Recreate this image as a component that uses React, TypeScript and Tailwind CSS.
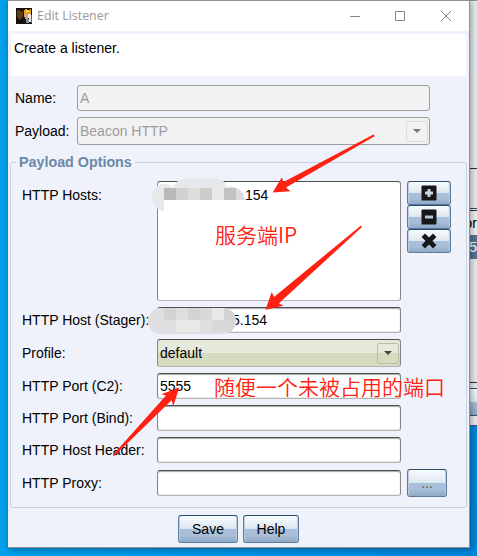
import type { ReactNode } from "react";

const edge = "border border-[#868686] border-t-[#4d4d4f] border-b-[#b3b3b5] rounded-[3px]";

function Row({ label, className, children }: { label: string; className: string; children: ReactNode }) {
  return (
    <div className={`flex shrink-0 ${className}`}>
      <label className="w-[135px] shrink-0 whitespace-nowrap">{label}</label>
      {children}
    </div>
  );
}

function Input({ value = "" }: { value?: string }) {
  return (
    <div className={`h-[26px] w-[244px] bg-white pl-[2px] leading-[25px] shadow-[inset_0_1px_1px_#aaa,inset_0_-1px_0_#ededed] ${edge}`}>{value}</div>
  );
}

function Button({ className, children }: { className: string; children: ReactNode }) {
  return (
    <button
      className={`flex shrink-0 items-center justify-center rounded-[3px] border border-[#5d7b9d] border-t-[#294a69] bg-[linear-gradient(#fafcfe_0%,#dce7f1_48%,#a9bed8_50%,#a9bed8_75%,#8fa9c5_100%)] shadow-[inset_1px_0_0_#b9cce0,inset_-1px_0_0_#b9cce0] ${className}`}
    >
      {children}
    </button>
  );
}

function Chevron({ className }: { className: string }) {
  return (
    <span className={`flex h-[21px] w-[22px] items-center justify-center rounded-[2px] border ${className}`}>
      <svg width="8" height="4" viewBox="0 0 8 4" fill="currentColor"><path d="M0 0h8L4 4z" /></svg>
    </span>
  );
}

function AppIcon() {
  return (
    <svg width="16" height="16" viewBox="0 0 16 16" shapeRendering="crispEdges">
      <path fill="#17120d" d="M0 0h16v16H0z" />
      <path fill="#5c410e" d="M1 3l2-1 2 2 2-1v5l-2 3-2 1-2-4z" />
      <path fill="#e9a01c" d="M8 2l2-1 2 1 3-1v4l-2 2H8z" />
      <path fill="#ffe054" d="M10 2h3v2h-3z" />
      <path fill="#d7a186" d="M8 6h4v5H9z" />
      <path fill="#f1e6df" d="M12 6h3v8h-2z" />
      <path fill="#7890a0" d="M10 11h3v4h-3z" />
      <path fill="#bd4a22" d="M15 7h1v8h-1z" />
    </svg>
  );
}

function DesktopWindow() {
  return (
    <div className="absolute top-0 right-0 flex h-[426px] w-[415px] flex-col border-t border-b border-t-[#8f9095] border-b-[#456] bg-[#e9ebf2] text-right">
      <div className="h-[168px] shrink-0 border-b border-[#333]" />
      <div className="h-[40px] shrink-0 border-b border-[#31516f]" />
      <div className="mt-px h-[25px] shrink-0 border-t border-[#333] bg-[#f2f2f2] leading-[25px]">or</div>
      <div className="h-[24px] shrink-0 bg-[#587491] leading-[25px] text-white">55</div>
      <div className="h-[124px] shrink-0 border-b border-[#333]" />
      <div className="mt-[5px] h-[28px] shrink-0 border-y border-[#31516f] bg-[linear-gradient(#fafcfe,#dce7f1_48%,#a9bed8_50%,#8fa9c5)]" />
    </div>
  );
}

function Annotations() {
  return (
    <>
      <svg className="pointer-events-none absolute inset-0" width="477" height="556" viewBox="0 0 477 556">
        <path fill="#e7e8eb" d="M164 184c4 0 7 1 9 4 1-6 7-9 14-9 12-1 24-1 31 0 6 1 8 4 8 8 9-2 17 3 19 13H164v11c-8-1-12-7-12-14s4-13 12-13z" />
        <g shapeRendering="crispEdges">
          <path fill="#b9b9b9" d="M164 188h12v12h-12z" />
          <path fill="#d0d2d2" d="M176 188h12v12h-12z" />
          <path fill="#dfddda" d="M188 188h12v12h-12z" />
          <path fill="#cccece" d="M200 188h12v12h-12z" />
          <path fill="#e8e8e8" d="M212 188h12v12h-12z" />
          <path fill="#c3c2c2" d="M224 188h12v12h-12z" />
        </g>
        <path fill="#dcdcdd" d="M236 188c5 2 8 6 9 12h-9z" />
        <clipPath id="smear"><rect x="148" y="308" width="88" height="26" rx="13" /></clipPath>
        <g clipPath="url(#smear)" shapeRendering="crispEdges">
          <path fill="#dfdfe1" d="M148 308h88v26h-88z" />
          <path fill="#d3d3d4" d="M164 308h12v12h-12zM188 308h12v12h-12zM224 308h12v12h-12z" />
          <path fill="#e9e8e7" d="M212 308h12v12h-12zM188 320h12v12h-12zM176 320h12v12h-12z" />
          <path fill="#d8d8d8" d="M200 308h12v12h-12zM212 320h24v12h-24z" />
        </g>
        <g fill="#ff2212">
          <path d="M272.7 192.5L281.7 177.5L283.5 182L373.5 134.5L375 136L286 187.5L290.5 191.3Z" />
          <path d="M265.5 309.7L271.7 292L274 297L361 225.5L362 227L279 303.3L283.2 305.8Z" />
          <path d="M179.3 387.5L161.3 394.3L166 395.5L112.8 455L114.3 456L171.5 400.3L173.3 406Z" />
        </g>
      </svg>
      <span className="absolute top-[219px] left-[215px] font-['Noto_Sans_CJK_SC',sans-serif] text-[21px] leading-[30px] font-[350] whitespace-nowrap text-[#ff2212]">服务端IP</span>
      <span className="absolute top-[371px] left-[214px] font-['Noto_Sans_CJK_SC',sans-serif] text-[21px] leading-[30px] font-[350] whitespace-nowrap text-[#ff2212]">随便一个未被占用的端口</span>
    </>
  );
}

export default function App() {
  return (
    <main className="relative h-[556px] w-[477px] overflow-hidden bg-[linear-gradient(90deg,#00a2ed,#0086dc)] pl-[8px] font-['Liberation_Sans',Arial,sans-serif] text-[14px] text-black">
      <DesktopWindow />
      <section className="relative flex h-[548px] w-[462px] flex-col border-t border-r border-b border-[#8f9095] bg-[#eff2fb] shadow-[1px_1px_7px_rgba(0,0,0,0.4)]">
        <header className="flex h-[30px] shrink-0 items-center bg-white pl-[8px] text-[#999]">
          <AppIcon />
          <h1 className="ml-[5px] font-['Open_Sans',sans-serif] text-[12.4px]">Edit Listener</h1>
          <svg className="mr-[17px] ml-auto" width="103" height="12" viewBox="0 0 103 12" fill="none" stroke="#888">
            <path d="M1 6.5h10M46.5 1.5h9v9h-9zM92 1l10 10M102 1L92 11" />
          </svg>
        </header>
        <p className="mx-[3px] mt-[3px] h-[42px] shrink-0 bg-white pt-[4px] pl-[3px] leading-[21px]">Create a listener.</p>
        <div className="mt-[9px] flex h-[26px] shrink-0 pl-[7px]">
          <label className="w-[62px] leading-[26px]">Name:</label>
          <div className="w-[353px] rounded-[3px] border border-[#9c9ca0] bg-[#f2f2f2] pl-[2px] leading-[25px] text-[#9c9ca0]">A</div>
        </div>
        <div className="mt-[6px] flex h-[28px] shrink-0 pl-[7px]">
          <label className="w-[62px] leading-[28px]">Payload:</label>
          <div className="flex w-[353px] items-center justify-between rounded-[3px] border border-[#9c9ca0] bg-[#f2f2f2] pr-px pl-[2px] text-[#9c9ca0]">
            Beacon HTTP
            <Chevron className="border-[#dcdcdc] text-[#777]" />
          </div>
        </div>
        <fieldset className="mx-[2px] mt-[8px] flex h-[355px] shrink-0 flex-col rounded-[3px] border border-[#c5d2e2] pl-[11px]">
          <legend className="-ml-[6px] px-[3px] text-[14.3px] leading-[18px] font-bold text-[#6a88a8]">Payload Options</legend>
          <Row label="HTTP Hosts:" className="mt-[10px] h-[120px] leading-[29px]">
            <div className={`w-[244px] bg-white pt-[3px] pl-[87px] leading-[20px] ${edge}`}>154</div>
            <div className="ml-[6px] flex flex-col">
              <Button className="h-[24px] w-[44px]">
                <svg width="16" height="16" viewBox="0 0 16 16"><rect x=".5" y=".5" width="15" height="15" rx="1" fill="#171717" /><path d="M8 4v8M4 8h8" stroke="#c7d6e7" strokeWidth="3" /></svg>
              </Button>
              <Button className="h-[24px] w-[44px]">
                <svg width="16" height="16" viewBox="0 0 16 16"><rect x=".5" y=".5" width="15" height="15" rx="1" fill="#171717" /><path d="M4 8h8" stroke="#b5c8de" strokeWidth="3" /></svg>
              </Button>
              <Button className="h-[24px] w-[44px]">
                <svg width="16" height="16" viewBox="0 0 16 16"><path d="M2.3 2.3l11.4 11.4M13.7 2.3l-11.4 11.4" stroke="#171717" strokeWidth="4.8" /></svg>
              </Button>
            </div>
          </Row>
          <Row label="HTTP Host (Stager):" className="mt-[6px] h-[26px] leading-[27px]">
            <div className={`h-[26px] w-[244px] bg-white pl-[74px] leading-[25px] shadow-[inset_0_1px_1px_#aaa,inset_0_-1px_0_#ededed] ${edge}`}>5.154</div>
          </Row>
          <Row label="Profile:" className="mt-[6px] h-[28px] leading-[28px]">
            <div className={`flex h-[28px] w-[244px] items-center justify-between bg-[linear-gradient(#e4e8d6_0%,#e8ebdc_48%,#d5dabd_50%,#d8ddc2_100%)] pr-px pl-[2px] ${edge}`}>
              default
              <Chevron className="border-[#b8bda5] text-[#444]" />
            </div>
          </Row>
          <Row label="HTTP Port (C2):" className="mt-[6px] h-[26px] leading-[27px]"><Input value="5555" /></Row>
          <Row label="HTTP Port (Bind):" className="mt-[6px] h-[26px] leading-[27px]"><Input /></Row>
          <Row label="HTTP Host Header:" className="mt-[6px] h-[26px] leading-[27px]"><Input /></Row>
          <Row label="HTTP Proxy:" className="mt-[6px] h-[28px] items-center leading-[27px]">
            <Input />
            <Button className="ml-[6px] h-[28px] w-[40px] text-[#555]">...</Button>
          </Row>
        </fieldset>
        <footer className="mt-[7px] flex shrink-0 gap-[5px] pl-[170px]">
          <Button className="h-[28px] w-[60px]">Save</Button>
          <Button className="h-[28px] w-[56px]">Help</Button>
        </footer>
      </section>
      <Annotations />
    </main>
  );
}
